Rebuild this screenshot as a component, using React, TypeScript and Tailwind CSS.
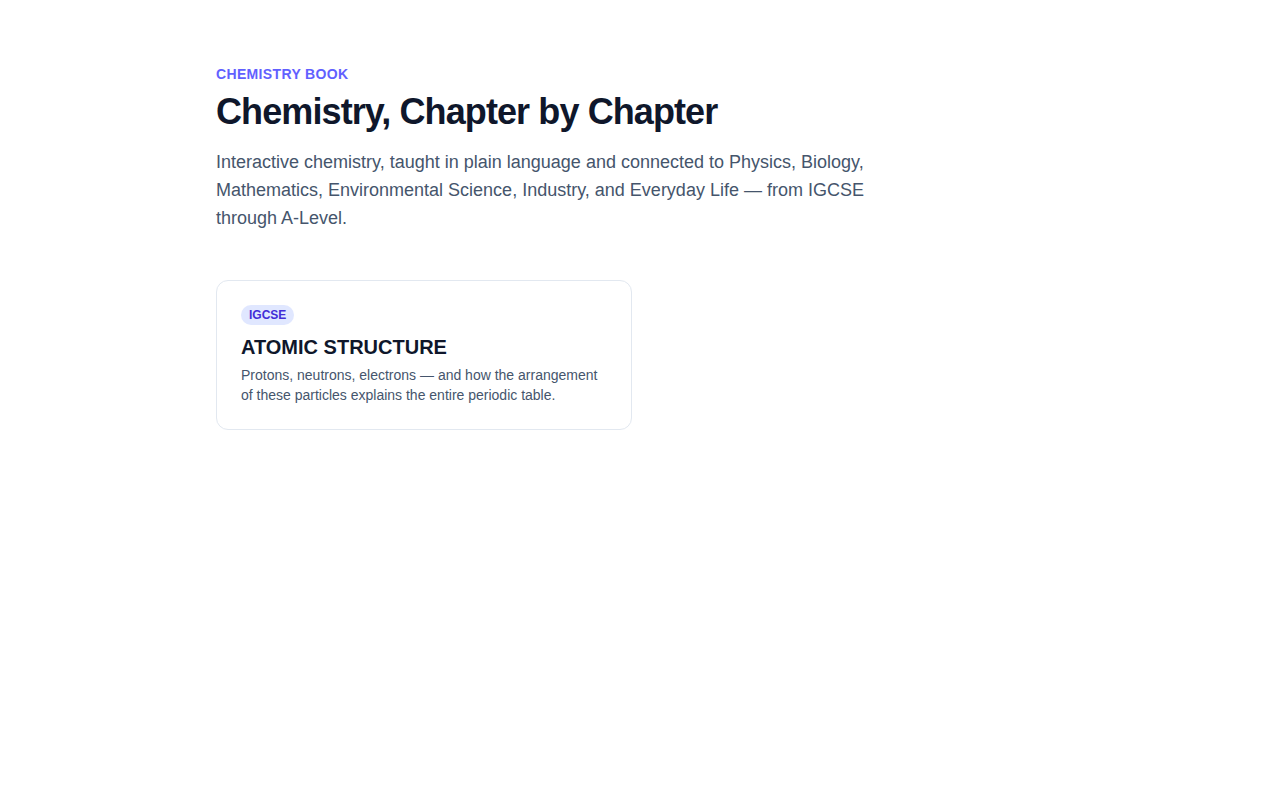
export default function App() {
  return (
    <div className="min-h-screen bg-white" style={{ fontFamily: '"Liberation Sans", Arial, sans-serif' }}>
      <div className="mx-auto max-w-[848px] pt-16 pb-16">
        <p className="text-sm font-semibold uppercase tracking-wide text-indigo-500">Chemistry Book</p>
        <h1 className="mt-2 text-4xl font-bold tracking-tight text-slate-900">Chemistry, Chapter by Chapter</h1>
        <p className="mt-4 max-w-2xl text-lg leading-7 text-slate-600">
          Interactive chemistry, taught in plain language and connected to Physics, Biology, Mathematics, Environmental
          Science, Industry, and Everyday Life — from IGCSE through A-Level.
        </p>

        <div className="mt-12 grid grid-cols-2 gap-4">
          <div className="rounded-xl border border-slate-200 bg-white p-6">
            <span className="block w-fit rounded-full bg-indigo-100 px-2 py-0.5 text-xs font-semibold text-indigo-700">
              IGCSE
            </span>
            <h2 className="mt-2 text-xl font-bold uppercase text-slate-900">Atomic Structure</h2>
            <p className="mt-1 text-sm text-slate-600">
              Protons, neutrons, electrons — and how the arrangement of these particles explains the entire periodic table.
            </p>
          </div>
        </div>
      </div>
    </div>
  );
}
